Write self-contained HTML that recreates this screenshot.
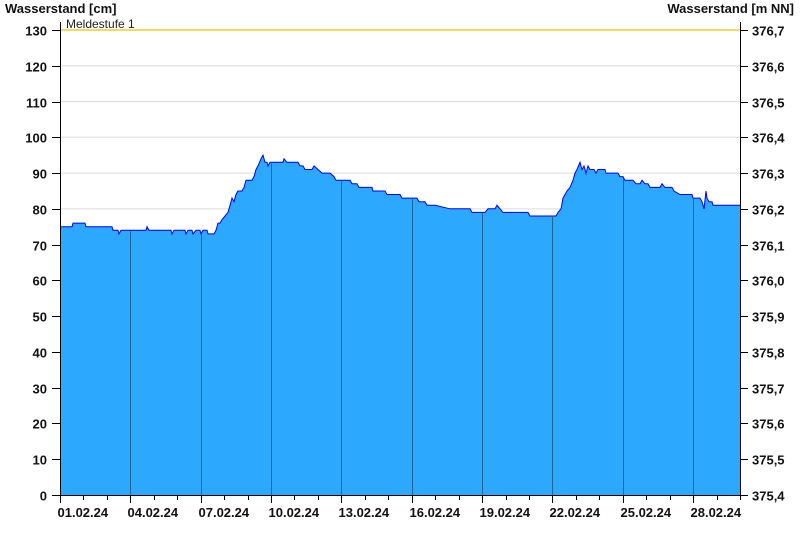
<!DOCTYPE html>
<html><head><meta charset="utf-8"><style>
html,body{margin:0;padding:0;background:#fff;width:800px;height:550px;overflow:hidden}
svg{display:block;font-family:"Liberation Sans",Arial,sans-serif}
</style></head><body>
<svg id="c" width="800" height="550" viewBox="0 0 800 550">
<rect width="800" height="550" fill="#fff"/>
<g id="grid"></g>
<path id="area" fill="#2ca8ff" stroke="none"/>
<g id="vl"></g>
<path id="line" fill="none" stroke="#0000ff" stroke-width="1"/>
<line x1="60" y1="30" x2="740" y2="30" stroke="#f5c400" stroke-width="1.2"/>
<text x="66" y="28" font-size="12" fill="#222">Meldestufe 1</text>
<g id="ax" stroke="#000" stroke-width="1"></g>
<g id="lab" font-size="13" font-weight="bold" fill="#111"></g>
<text x="5" y="13" font-size="13" font-weight="bold" fill="#111">Wasserstand [cm]</text>
<text x="794" y="13" font-size="13" font-weight="bold" fill="#111" text-anchor="end">Wasserstand [m NN]</text>
</svg>
<script>
var ns="http://www.w3.org/2000/svg";
function el(p,t,a,txt){var e=document.createElementNS(ns,t);for(var k in a)e.setAttribute(k,a[k]);if(txt!=null)e.textContent=txt;document.getElementById(p).appendChild(e);}
function Y(v){return 495-v*3.577;}
for(var v=10;v<=120;v+=10){el("grid","line",{x1:60,x2:740,y1:Y(v),y2:Y(v),stroke:"#dcdcdc","stroke-width":1});}
var d=[[60,75],[72,75],[73,76],[85,76],[86,75],[112,75],[113,74],[118,74],[119,73],[121,74],[146,74],[147,75],[149,74],[171,74],[172,73],[174,74],[185,74],[186,73],[188,74],[192,74],[193,73],[196,74],[200,74],[201,73],[203,74],[207,74],[208,73],[211,73],[214,73],[216,74],[218,76],[220,76],[222,77],[225,78],[228,79],[231,82],[232,83],[234,82],[236,84],[238,85],[242,85],[244,86],[246,88],[252,88],[254,89],[256,91],[258,92],[261,94],[263,95],[265,93],[267,93],[268,92],[270,93],[283,93],[284,94],[287,93],[298,93],[300,92],[303,92],[305,91],[312,91],[314,92],[318,91],[322,90],[330,90],[334,89],[336,88],[350,88],[352,87],[357,87],[359,86],[372,86],[373,85],[385,85],[387,84],[400,84],[402,83],[417,83],[419,82],[425,82],[427,81],[433,81],[435,81],[450,80],[470,80],[472,79],[485,79],[488,80],[495,80],[497,81],[500,80],[503,79],[528,79],[530,78],[556,78],[558,79],[561,80],[563,83],[565,84],[567,85],[570,86],[573,88],[575,90],[577,91],[580,93],[582,91],[584,92],[586,90],[588,92],[590,91],[594,91],[596,90],[598,91],[605,91],[606,90],[618,90],[620,89],[623,89],[625,88],[633,88],[636,87],[640,87],[642,88],[645,87],[648,87],[650,86],[660,86],[662,87],[665,86],[672,86],[674,85],[680,84],[692,84],[693,83],[700,83],[702,82],[704,80],[706,85],[707,83],[709,82],[712,82],[713,81],[725,81],[726,81],[740,81]];
var p="M"+d.map(function(q){return q[0]+","+Y(q[1]).toFixed(1)}).join(" L");
document.getElementById("line").setAttribute("d",p);
document.getElementById("area").setAttribute("d",p+" L740,495 L60,495 Z");
var pd=680/29;
[3,6,9,12,15,18,21,24,27].forEach(function(i){var x=Math.round(60+i*pd)+0.5;el("vl","line",{x1:x,x2:x,y1:Y(d.reduce(function(a,q){return q[0]<=x?q[1]:a},75))+1,y2:495,stroke:"#1a6496","stroke-width":1});});
el("ax","line",{x1:60.5,x2:60.5,y1:22,y2:495});
el("ax","line",{x1:740.5,x2:740.5,y1:22,y2:495});
el("ax","line",{x1:52,x2:740,y1:495.5,y2:495.5});
for(var v=0;v<=130;v+=10){var y=Math.round(Y(v))+0.5;el("ax","line",{x1:52,x2:60,y1:y,y2:y});el("ax","line",{x1:740,x2:748,y1:y,y2:y});
el("lab","text",{x:47,y:y+5,"text-anchor":"end"},String(v));
el("lab","text",{x:752,y:y+5},(375.4+v/100).toFixed(1).replace(".",","));}
for(var i=0;i<=29;i++){var x=Math.round(60+i*pd)+0.5;var maj=i%3==0;el("ax","line",{x1:x,x2:x,y1:495,y2:maj?503:500});
if(maj&&i<29){var dd=i+1;el("lab","text",{x:x-3,y:517},(dd<10?"0":"")+dd+".02.24");}}
</script>
</body></html>
